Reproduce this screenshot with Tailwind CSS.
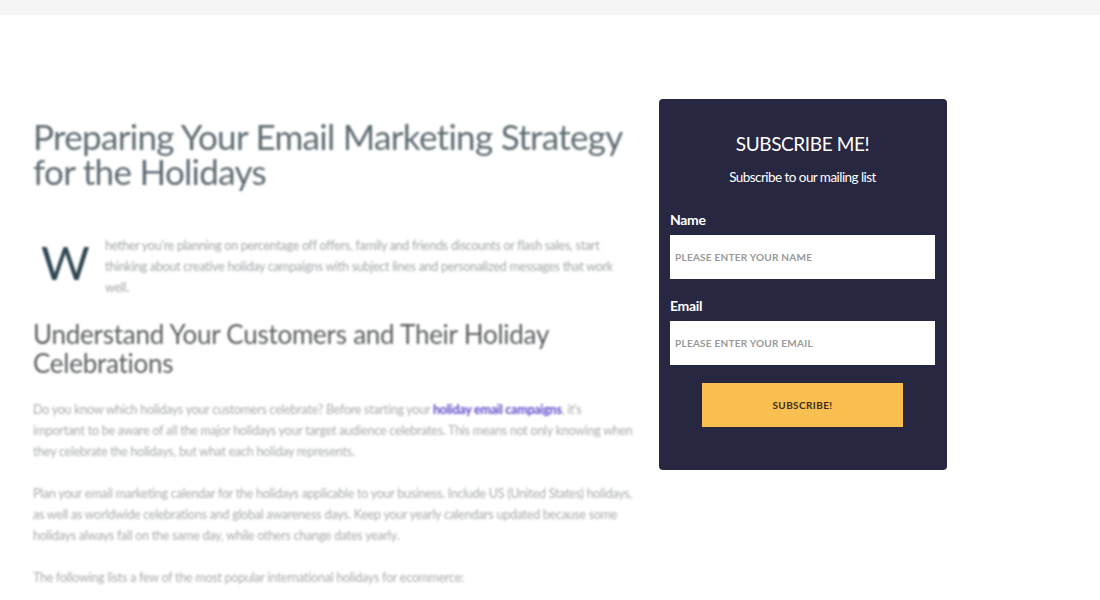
<!DOCTYPE html>
<html lang="en">
<head>
  <meta charset="UTF-8" />
  <meta name="viewport" content="width=device-width, initial-scale=1.0"/>
  <title>Preparing Your Email Marketing Strategy for the Holidays</title>
  <script src="https://cdn.jsdelivr.net/npm/@tailwindcss/browser@4"></script>
</head>
<body class="bg-white h-[600px] overflow-hidden font-['Lato','Liberation_Sans',sans-serif]">

<div class="h-[15px] bg-[#f5f5f5]"></div>

<main class="flex items-start pl-[33px] pt-[84px]">
  <!-- blurred article -->
  <article class="w-[601px] shrink-0 blur-[1.3px]">
    <h1 class="text-[35px] leading-[35px] pt-[20px] font-normal text-[#5f6c72] tracking-[-0.7px]">Preparing Your Email Marketing Strategy for the Holidays</h1>

    <div class="flex mt-[46px]">
      <span class="w-[72px] shrink-0 pl-[8px] text-[47px] leading-[55px] font-normal text-[#2f4650]">W</span>
      <p class="text-[12.5px] leading-[21px] text-[#a3a6a8] pr-[10px] tracking-[-0.27px]">hether you're planning on percentage off offers, family and friends discounts or flash sales, start thinking about creative holiday campaigns with subject lines and personalized messages that work well.</p>
    </div>

    <h2 class="mt-[22px] text-[26px] leading-[29px] font-normal text-[#5b5e60] tracking-[-0.25px]">Understand Your Customers and Their Holiday Celebrations</h2>

    <p class="mt-[21px] text-[12.5px] leading-[21px] text-[#a9abad] tracking-[-0.25px]">Do you know which holidays your customers celebrate? Before starting your <a class="text-[#5b48c8] font-bold">holiday email campaigns</a>, it's important to be aware of all the major holidays your target audience celebrates. This means not only knowing when they celebrate the holidays, but what each holiday represents.</p>

    <p class="mt-[21px] text-[12.5px] leading-[21px] text-[#a9abad] tracking-[-0.25px]">Plan your email marketing calendar for the holidays applicable to your business. Include US (United States) holidays, as well as worldwide celebrations and global awareness days. Keep your yearly calendars updated because some holidays always fall on the same day, while others change dates yearly.</p>

    <p class="mt-[21px] text-[12.5px] leading-[21px] text-[#a9abad] tracking-[-0.25px]">The following lists a few of the most popular international holidays for ecommerce:</p>
  </article>

  <!-- subscribe card -->
  <form class="ml-[25px] w-[288px] h-[371px] shrink-0 rounded-[4px] bg-[#272741] pl-[11px] pr-[12px] pt-[32px] text-white">
    <h3 class="text-center text-[19px] leading-[26px] font-normal tracking-[-0.4px]">SUBSCRIBE ME!</h3>
    <p class="mt-[10px] text-center text-[13.5px] leading-[20px] font-normal tracking-[-0.55px]">Subscribe to our mailing list</p>

    <label class="mt-[23px] block text-[14px] leading-[20px] font-bold tracking-[-0.3px]">Name</label>
    <div class="mt-[5px] flex h-[44px] items-center bg-white pl-[5px] text-[10px] font-bold uppercase tracking-[0.25px] text-[#999]">Please enter your name</div>

    <label class="mt-[17px] block text-[14px] leading-[20px] font-bold tracking-[-0.3px]">Email</label>
    <div class="mt-[5px] flex h-[44px] items-center bg-white pl-[5px] text-[10px] font-bold uppercase tracking-[0.25px] text-[#999]">Please enter your email</div>

    <div class="mt-[18px] mx-[32px] flex h-[44px] items-center justify-center bg-[#f9c051] text-[10px] font-bold uppercase tracking-[0.4px] text-[#3d2c1a]">Subscribe!</div>
  </form>
</main>

</body>
</html>
